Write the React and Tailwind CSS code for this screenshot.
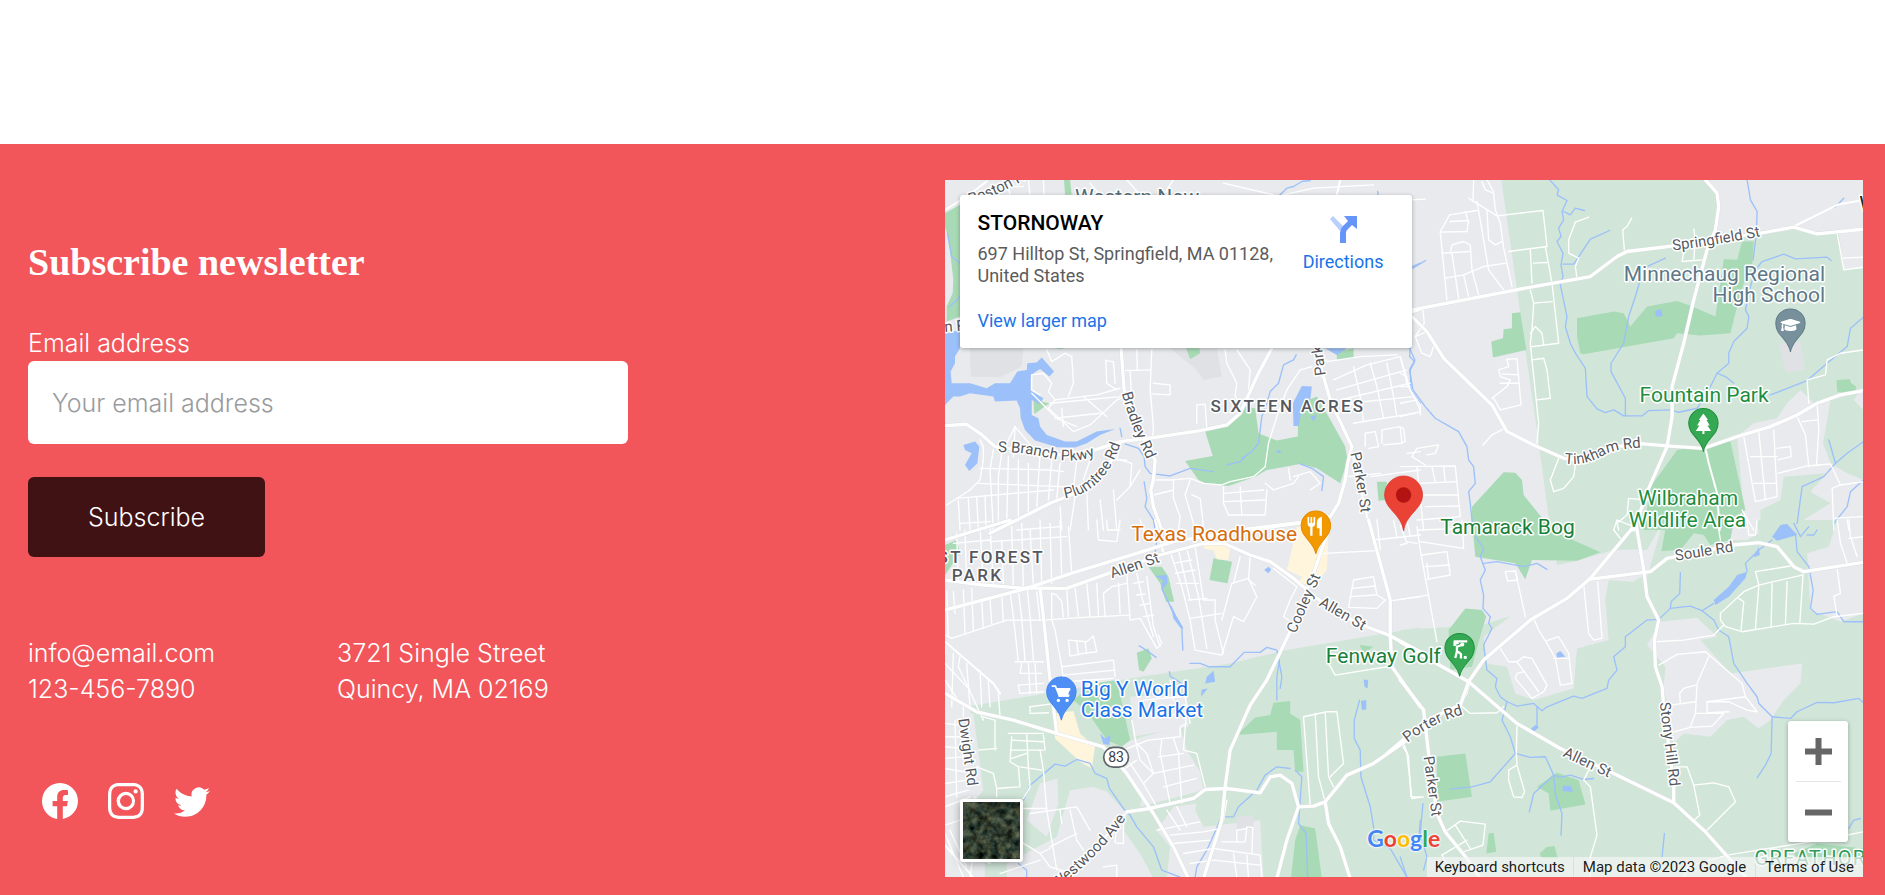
import React from "react";
import { FaGraduationCap } from "react-icons/fa";
import { BsFacebook, BsInstagram, BsTwitter } from "react-icons/bs";

/* The map canvas is 2754 x 2091 units and is split in four sheets, each with its own origin. */
const SHEETS = [
  {
    id: "nw",
    at: "translate(-15 -30)",
    pale: [],
    island: [],
    block: [
      "90,535 250,535 245,590 180,622 92,620",
      "690,535 830,535 845,620 790,630 770,600 745,580 720,560",
    ],
    green: [
      "15,130 60,105 60,440 20,455 20,410 38,370 40,330 25,200 15,170",
      "372,30 390,30 395,75 375,75",
      "738,535 778,535 780,550 750,568",
      "1190,545 1240,535 1240,565 1190,570",
      "280,690 328,700 283,732",
      "340,535 375,535 360,538",
      "795,785 860,770 915,710 945,715 955,790 1010,812 1073,800 1073,750 1105,690 1130,680 1165,740 1215,830 1222,870 1200,940 1130,895 1080,882 980,900 945,920 865,948 800,942 775,930 735,873 818,858",
      "1310,935 1340,935 1335,990 1315,992",
    ],
    yellow: [],
    water: [
      "15,490 60,480 60,535 45,560 45,580 32,605 35,640 90,640 140,655 165,640 210,640 232,605 260,600 262,580 290,578 305,563 342,605 328,620 300,597 280,610 272,625 272,662 310,685 300,703 275,690 275,735 295,745 300,770 320,795 375,815 410,815 440,800 470,785 525,777 480,795 440,820 405,833 350,832 320,822 285,812 255,780 242,745 240,715 230,692 165,695 160,680 90,670 60,680 40,680 15,705",
      "70,825 105,815 118,830 112,880 88,903 75,885 95,850 75,840",
      "1058,700 1085,648 1115,650 1110,690 1085,720 1075,768 1060,768",
      "1155,535 1220,535 1190,555",
      "1110,740 1130,735 1120,755",
      "1008,848 1015,838 1024,850",
    ],
    stream: [
      "1068,555 1060,570 1030,585 1015,640 990,665 980,700 965,740 955,820 935,845 905,865",
      "540,775 545,800",
      "555,822 595,835 612,860 615,890 630,910 690,918 750,895 820,905",
      "860,885 900,875 915,860",
      "1080,882 1115,895 1150,920 1145,962",
      "1018,76 1040,55 1060,50 1085,35 1110,32",
      "1410,535 1408,560 1423,575 1410,600 1412,660 1440,700",
      "22,190 35,260 60,280",
      "60,380 30,410",
      "612,935 620,985 615,1010 640,1050",
      "1416,290 1440,280",
      "1312,65 1314,76",
    ],
    minor: [
      "200,30 210,75", "265,30 270,75", "310,30 312,75", "450,40 480,75", "670,75 700,30", "560,30 600,75", "1030,75 1120,55 1300,45", "850,40 1000,75", "150,50 250,50",
      "275,615 310,610 335,640 325,665 345,690 470,675 540,655",
      "345,690 325,715 400,785 450,765 530,690 555,680",
      "275,670 350,745 410,770", "330,700 540,680", "345,745 480,730", "365,715 370,770", "430,680 500,740",
      "275,615 275,660 300,675",
      "320,540 335,575 375,550 395,560 400,640 385,680",
      "497,570 500,640 530,660", "497,572 520,575 525,640", "555,602 630,600", "635,540 630,660 640,770 638,800", "640,640 690,645 690,675 635,672", "570,602 575,690", "590,540 592,600",
      "855,540 860,580 890,640 885,680 900,700", "890,540 930,600 925,660",
      "770,760 770,705 795,703 800,775",
      "1115,590 1080,600 1040,660 1010,740 985,820 975,890 940,920 870,935 845,945 790,940 750,925 690,930 645,930",
      "1160,570 1130,600 1150,630", "1180,630 1280,585 1380,560 1400,640 1440,720", "1160,575 1260,560 1370,555", "1190,660 1400,600", "1200,690 1410,640", "1225,700 1420,680", "1240,590 1260,680 1270,755", "1290,580 1310,650 1330,745", "1340,580 1360,680 1370,740", "1240,760 1330,745 1425,730", "1205,720 1240,700",
      "1275,830 1275,790 1305,785 1315,830 1285,835", "1325,820 1325,780 1380,770 1385,820 1330,825",
      "1220,920 1320,910", "1290,920 1440,900", "1400,850 1440,845",
      "850,950 850,1000 865,1035 975,1035 980,960", "850,995 975,990", "900,950 905,1035", "850,970 970,960", "750,930 735,975 760,1060", "755,975 780,985 790,1070", "700,930 700,985 720,1040 715,1080", "640,975 700,960",
      "1060,920 1110,905 1140,940 1110,960", "975,940 1000,960 1060,940 1075,920", "1045,895 1050,930",
      "120,810 130,830 130,870 120,930 90,960", "160,840 150,900 160,1080", "185,850 175,920 175,1060", "225,770 220,860", "225,770 190,840", "225,770 275,830", "120,895 330,900 370,905", "110,940 370,950", "50,985 340,960", "90,960 20,1005",
      "205,860 200,1060", "235,870 235,1040", "265,880 265,1030", "300,850 290,1010", "335,870 325,990", "360,880 350,985", "55,990 60,1080", "85,985 90,1080", "110,980 115,1080", "135,975 138,1080", "60,1060 150,1055", "410,870 400,960", "450,870 430,930", "540,870 575,880 570,950 530,990", "480,990 490,1080", "520,960 530,1080", "600,900 570,950",
      "540,820 530,870 560,870", "405,980 390,1080", "440,960 445,1080", "360,1010 365,1080",
    ],
    mid: ["1190,75 1200,30", "1235,850 1260,950 1285,1060 1295,1080", "15,120 80,80 140,35", "1416,445 1440,470"],
    major: [
      "15,767 80,763 120,790 165,830 280,845 400,860 470,838 540,815 640,803 780,782 860,765 900,730 950,620 995,535",
      "543,535 552,660 600,790 645,870 640,930 632,960 640,1010 665,1080",
      "540,820 500,900 430,960 330,1000 210,1060 150,1090",
      "1128,535 1150,620 1170,690 1235,830 1222,880 1215,930 1195,1000 1170,1040 1100,1055 900,1080",
      "1416,425 1440,418",
    ],
  },
  {
    id: "ne",
    at: "translate(1365 -30)",
    pale: [
      "303,30 915,30 955,75 955,110 945,200 1180,170 1250,190 1315,190 1330,300 1389,295 1389,660 1310,680 1240,700 1200,660 1160,700 1130,745 1060,760 1010,800 1035,1080 450,1080 410,780 375,540 350,360",
      "1290,690 1389,665 1389,930 1340,910 1290,880 1268,820",
      "1150,920 1280,910 1230,965 1290,1000 1160,1080 1080,1080 1080,1020 1140,990",
    ],
    island: ["1360,690 1389,650 1389,720"],
    block: ["1135,520 1200,515 1212,600 1157,607"],
    green: [
      "530,445 640,425 670,430 690,470 740,410 830,393 865,405 945,440 970,268 1010,270 1025,215 1060,215 1055,290 1030,340 1005,430 990,490 900,497 830,490 820,505 550,553 540,550 530,500",
      "335,430 360,427 378,540 278,563 273,515 308,505 310,478 335,475",
      "310,907 345,908 365,930 370,975 430,1050 450,1080 215,1080 215,1010",
      "830,840 990,815 1035,1020 940,1080 730,1080 750,950 780,910",
      "1308,630 1348,628 1352,640 1367,650 1365,662 1320,668 1310,665",
    ],
    yellow: [],
    water: ["765,422 783,418 786,440 766,440", "1130,1080 1150,1062 1165,1080"],
    stream: [
      "448,30 475,60 470,75 500,92 485,125 490,150 475,175 482,200 470,215 488,250 482,285 488,320 480,345 500,440 495,470 510,520 525,550 555,595 560,680 590,717 615,728 640,720 670,738 725,738 745,722 810,720 835,727 890,715 925,660 950,610 985,580 985,550 1000,515 1040,475 1045,440 1035,420 1050,350 1065,300",
      "490,125 510,135 525,115 552,122",
      "488,283 520,283 570,208 628,182",
      "795,265 730,295 705,380 685,440 670,520 632,580 632,605 675,685 675,738",
      "1040,30 1050,90 1070,125 1068,190 1058,270",
      "1065,300 1085,275 1150,253 1185,267 1280,262 1292,272",
      "950,610 975,620 1000,640",
      "1110,675 1220,632 1280,580 1340,530 1350,475 1389,442",
      "28,535 44,570 28,600 38,660 75,710 105,745 175,785 200,830 205,870 220,890 225,940 205,965 210,1000 218,1080",
      "1389,930 1350,965 1340,1010 1300,1060",
      "1285,810 1305,880 1270,920 1205,950 1190,1060",
      "1305,880 1340,850 1389,815", "1303,112 1330,85", "38,295 76,272",
    ],
    minor: [
      "220,30 218,95", "205,85 290,138 428,122 440,230 325,245", "245,35 255,60 280,70 285,120 300,160 310,235 335,350", "260,30 280,65", "230,95 245,180 265,300 310,360",
      "148,135 230,122", "148,135 120,185 140,390", "150,155 205,152 200,185 120,187", "150,250 155,225 190,215 210,225 215,300 235,375", "125,250 210,245", "135,325 190,315 250,290 318,280", "155,250 175,385", "190,315 205,380", "195,125 205,160", "260,120 265,210 285,225 305,215",
      "390,240 395,340", "435,230 455,340 475,520 395,530", "400,280 440,278", "390,360 400,400 395,480 390,520 395,570 415,760 410,820", "400,400 455,395", "390,490 405,470 425,490 430,525", "395,570 430,565 440,600 450,685 410,690",
      "68,420 72,460 45,500 65,550 90,560 100,530", "45,500 80,485",
      "320,568 350,566 362,705 300,720", "320,568 325,590 295,600 300,620 330,630 320,650 275,685", "305,612 355,615", "300,640 358,640", "280,685 300,720",
      "565,142 525,157 505,210 505,250 535,265 525,290 530,325", "694,145 680,170 667,180 672,240", "880,178 885,210 850,245 845,275 905,270", "885,210 880,270",
      "1310,190 1330,300 1389,292", "1322,265 1389,262",
      "1389,540 1320,550 1280,570 1275,615 1220,630 1225,700", "1250,700 1255,780 1248,885", "1190,740 1215,795 1225,890", "1205,755 1250,750", "1030,800 1065,995 1130,980 1120,780", "1050,860 1130,860", "1060,940 1130,940", "1075,785 1095,990", "1130,835 1170,830 1172,860 1132,870", "1132,910 1220,888 1290,882 1320,945 1295,955 1300,1080", "1320,945 1389,935", "1025,1020 1060,1080", "1300,1045 1389,1040", "1340,1050 1345,1080",
      "475,865 450,930 460,965 490,955 520,920 525,885", "310,777 275,795 248,825",
      "0,560 30,660 60,705 60,735", "0,610 20,620", "0,650 30,650", "0,740 60,725", "0,700 50,690", "0,820 15,815 10,775 0,772",
      "35,860 50,835 115,825 105,850 80,855", "35,860 75,885", "0,890 165,888 180,1040 50,1050", "50,890 70,1080", "55,940 170,935", "65,975 175,975", "75,1010 178,1008", "95,890 105,935", "130,890 135,935",
      "685,985 740,990", "685,985 680,1035 650,1060 655,1080", "36,90 75,88",
    ],
    mid: ["915,835 925,880 950,970 958,1080", "1180,170 1310,105 1389,90"],
    major: [
      "36,420 400,350 570,320 650,260 680,245 820,228 1080,190 1180,172 1250,192 1389,178",
      "915,30 950,70 955,110 945,180 920,240 880,390 850,520 815,650 815,740 800,830 745,955 700,1080",
      "36,440 80,485 130,565 275,705 320,785 400,825 490,865 550,870 620,835 710,820 800,828 910,835 1010,800 1110,770 1190,735 1250,700 1320,675 1389,662",
    ],
  },
  {
    id: "sw",
    at: "translate(-15 1020)",
    pale: ["90,558 330,518 600,470 870,430 1040,390 1440,322 1440,1075 135,1075 130,850 100,820"],
    island: [
      "570,530 740,520 745,620 580,650",
      "575,660 720,620 740,690 780,755 790,810 600,860 605,830 555,745 520,690",
      "390,810 460,800 500,815 560,880 550,930 600,1000 640,1075 480,1075 200,1075 200,1030 350,950",
      "700,860 770,850 765,870 790,920 960,900 970,1075 680,1075 690,980 650,930",
      "15,590 100,580 130,810 60,900 15,920",
      "300,790 352,775 355,850 320,950 260,900",
    ],
    block: ["890,890 940,885 940,925 890,930"],
    green: [
      "15,75 50,60 60,100 15,165",
      "820,115 876,125 862,190 808,180",
      "625,140 665,140 685,170 702,245 678,245 660,190",
      "590,398 625,385 635,415 610,455 597,450",
      "400,540 460,490 530,480 570,660 545,680 500,660 445,580",
      "1000,548 1050,543 1050,580 1080,600 1090,755 1065,755 1060,690 1010,690 1010,635 890,645 945,592 990,585",
      "1080,915 1125,925 1145,1075 1052,1075 1065,960",
      "1258,375 1300,380 1270,400",
    ],
    yellow: [
      "1070,20 1120,15 1165,40 1160,150 1125,190 1070,195 1085,170 1040,150 1050,110",
      "788,75 840,70 870,85 865,120 830,118 820,90 795,88",
      "340,580 400,573 420,640 465,680 455,745 420,725 345,655",
    ],
    water: [
      "972,150 985,140 993,148 985,160", "800,470 820,452 825,485 795,490", "785,508 803,505 782,530",
      "1270,478 1284,480 1282,505 1273,500", "1262,543 1278,540 1278,568 1265,570", "480,640 495,655 512,645 508,675 490,672",
      "645,168 680,165 682,190 668,208 668,180", "690,250 710,290 730,325 722,325 700,295",
    ],
    stream: [
      "640,0 650,60 645,100", "668,190 665,205 700,280 725,320 728,390", "597,377 610,385 625,395 648,412",
      "750,430 780,430 805,440 870,440 912,397 960,397 980,382 1010,390 1025,470 1020,505", "1018,420 1010,470 1010,540", "688,455 690,468 740,500",
      "1258,540 1242,600 1242,655 1260,690 1262,770 1290,860 1300,920 1300,960 1350,985 1400,1071",
      "1050,745 1010,740 975,765 950,810 895,860 880,890 855,890", "1065,750 1085,770 1075,910 1098,940 1102,1071",
      "250,840 270,795 345,732 375,738 410,718 450,730 465,760 500,775 508,805 550,865 570,885 590,920 640,980 665,1050 720,1071",
      "765,1071 770,1040 800,990 840,900", "235,1030 260,1050 260,1071", "1440,900 1437,940",
    ],
    minor: [
      "50,40 55,180", "75,30 80,185", "120,20 130,190", "150,15 160,190", "185,60 190,190", "215,20 220,200", "245,10 250,200", "270,30 280,195", "300,0 305,200", "330,10 335,190", "360,0 365,175", "385,20 395,160", "40,70 150,60", "150,65 380,50", "230,30 360,20",
      "20,215 25,350", "45,280 40,215", "70,210 75,340", "95,205 100,330", "125,240 130,325", "150,235 155,310", "185,225 190,305", "210,215 220,290 235,425", "235,210 245,295 255,425", "262,210 270,290 280,420", "290,215 300,300",
      "15,345 35,355 110,330 200,300 310,300 430,292 570,285", "335,220 350,225 365,245 370,290", "335,220 335,300 345,330 365,440 370,480", "380,210 385,290", "405,205 415,290", "440,190 450,290", "495,290 490,220 515,200 560,190", "470,190 475,285", "535,190 540,280",
      "225,425 310,425", "245,430 240,460 305,460", "235,495 310,490", "235,495 240,520 310,515", "265,430 270,520", "285,430 290,520",
      "385,360 440,365 460,348 470,395 430,400 390,408 385,360", "410,365 415,405", "435,365 440,400", "365,440 520,420 525,470", "370,465 525,450", "380,485 520,475",
      "270,560 330,552", "270,560 270,580 325,578",
      "560,160 570,300 600,295 650,385 665,370 655,345", "590,160 605,230 640,350", "620,170 640,320 660,380", "580,190 610,185", "590,225 615,222", "600,255 630,250", "610,290 640,285",
      "470,0 475,60 530,65 540,0", "500,0 502,30 540,30", "600,0 610,30 640,35",
      "690,95 725,200 750,300 765,390 845,405 880,290 910,305 950,230 925,175 875,190 845,300", "715,90 750,240", "740,85 775,230 800,385", "765,80 790,240 825,240 825,300 850,400", "700,130 755,120", "705,160 765,150", "710,190 775,190", "745,240 800,235", "750,295 845,280", "900,110 880,190", "930,110 925,180 945,195",
      "1000,145 1070,200 1050,240 1030,290 1045,300", "1240,180 1300,170 1310,225 1335,240 1310,265 1225,262 1240,180", "1235,205 1305,198", "1230,230 1305,225",
      "1150,100 1310,92", "1355,242 1440,230", "1310,0 1320,90", "1300,60 1440,45", "1360,0 1370,50", "1400,0 1410,48",
      "1165,430 1185,465 1340,440", "1090,590 1160,575 1190,575 1210,730 1170,770", "1090,590 1110,855", "1125,580 1135,770 1155,845", "1155,578 1165,770 1180,800", "1390,670 1405,710 1412,830 1440,830",
      "15,380 15,400", "40,400 35,560", "60,410 55,440 130,600", "15,480 60,550", "80,430 90,560", "120,450 125,560", "145,480 150,560", "175,520 180,590", "15,430 90,510", "15,610 60,615", "15,650 60,650", "15,680 65,685", "15,715 70,710", "15,745 75,755", "15,790 80,780", "15,830 85,810", "45,600 50,830", "15,860 90,830",
      "70,550 70,590", "130,590 165,600 165,690", "115,690 170,685", "110,740 160,760 170,805 240,800 235,740 210,725 215,650", "170,805 170,830", "205,640 310,640", "215,660 310,665", "210,690 310,690", "215,715 260,700", "260,640 265,740", "310,645 315,690",
      "300,690 310,750 320,870 350,1050", "240,740 305,750", "265,740 270,800 250,835", "270,880 410,860 450,930", "330,980 410,940", "360,870 365,910", "390,870 410,960", "235,960 300,1000 330,985", "300,1000 330,1040 400,1060", "320,865 250,865", "410,960 430,990", "550,890 550,970 525,968 530,900", "490,1040 530,1035 530,1071",
      "15,915 60,900", "15,940 70,1071", "30,930 80,1040", "90,1071 100,1000 150,1030", "180,1060 300,1020", "105,830 100,850",
      "550,690 625,660 720,650 720,620 740,610", "555,745 590,720", "590,680 600,720 640,760 610,790", "570,730 610,790 650,860", "590,670 620,700 640,760", "575,600 590,680", "665,660 660,700 690,850", "640,760 760,735", "700,655 715,700 725,850", "740,560 730,690 770,700 795,800", "655,710 730,700", "670,800 770,775",
      "640,590 740,580", "610,540 720,530", "690,480 700,540", "735,530 750,610",
      "650,930 780,905", "690,945 790,935 840,925", "700,970 810,960", "730,1000 820,985 960,1005 965,1071", "750,1030 820,1020 960,1035", "880,1000 890,1071", "920,1005 925,1071", "845,965 915,965 920,920 938,922 935,1000", "890,965 890,930 920,925", "680,870 720,930", "710,860 740,920", "860,840 850,900",
    ],
    mid: ["645,0 670,100", "15,365 160,490 180,520", "15,975 90,1060 100,1075", "560,875 470,980 370,1075"],
    major: [
      "15,60 210,0",
      "15,270 250,208 400,158 590,100 700,65 850,40 1090,8",
      "0,178 130,195 240,204 380,205 520,155 660,105 790,70 850,70 930,105 990,125 1060,175 1125,230 1190,280 1280,320 1345,345 1440,395",
      "1165,30 1120,160 1045,345 980,480 930,555 870,690 855,800 845,900 790,1075",
      "300,205 310,290 330,480 350,640",
      "15,520 110,575 220,600 350,640 490,680 560,760 640,880 700,980 745,1075",
      "1285,0 1350,240 1350,345 1355,440 1440,560",
      "560,875 630,865 760,835 795,808 860,805 960,818 990,770 1020,765 1055,790 1075,860 1120,858 1155,845 1220,765 1300,730 1400,660",
      "1075,860 1040,960 1010,1075",
      "1155,845 1165,910 1200,980 1230,1075",
    ],
  },
  {
    id: "se",
    at: "translate(1365 1020)",
    pale: [
      "0,330 0,1075 1389,1075 1389,0 790,0 740,170 625,180 615,240 625,360 530,385 520,505 400,540 345,520 320,440 260,430 250,350 330,288 245,315",
      "450,0 790,0 740,90 640,90 520,125 470,135",
    ],
    island: [
      "740,375 780,305 890,293 950,350 900,360 990,460 1205,430 1200,490 1150,540 1110,600 1075,625 1030,590 980,600 930,650 850,640 820,670 790,500 795,440",
      "1220,100 1285,80 1310,0 1389,0 1389,280 1320,305 1230,270",
      "1010,0 1070,0 1075,40 1040,60 960,60",
      "640,90 720,88 750,150 700,185 620,180 560,170",
    ],
    block: [],
    green: [
      "215,0 450,30 600,97 530,122 395,120 375,178 345,130 225,110",
      "195,265 245,270 258,290 245,330 215,440 150,450 145,330",
      "110,710 195,700 215,830 110,845",
      "410,800 470,758 500,768 535,780 555,853 450,872 445,820",
      "800,0 1000,0 990,60 930,75 910,45 880,40 840,90 783,93",
      "265,940 280,938 288,995 258,1000",
      "418,1000 440,980 463,978 472,1015 425,1015",
      "1180,1000 1250,970 1389,985 1389,1010 1200,1030",
    ],
    yellow: [],
    water: [
      "1115,50 1140,15 1160,12 1190,45 1130,62", "940,240 985,200 1010,165 1040,155 1035,175 985,230 945,255",
      "468,400 480,393 495,410 470,413", "487,797 512,797 518,815 487,813", "392,625 410,612 415,622 400,635", "1075,80 1078,105 1060,112",
    ],
    stream: [
      "225,50 250,85 240,110 255,150 240,180 250,225 248,265 270,290 265,310 275,325 250,375 260,450 290,475 285,500 300,530 320,545 350,558 400,550 425,572 440,560 520,528 545,535 620,505 625,480 650,450 640,410 675,380 675,350 740,300 775,298 810,265 870,258 905,272 940,250",
      "250,130 290,125 370,140 410,130 440,148", "840,158 838,220 812,245 810,265",
      "905,272 940,300 955,330 985,350 1000,430 1040,490 1070,530 1075,550 1115,590 1112,700 1095,735 1070,773",
      "1115,590 1170,595 1190,575 1250,547 1300,548 1375,535 1389,548", "1040,155 1035,130 1075,90 1115,60",
      "1185,40 1190,95 1225,140 1238,210 1230,265 1250,283 1310,275 1330,305 1389,305",
      "320,545 305,600 330,650 345,700 390,712 435,710 460,765 465,820 485,880 482,945",
      "150,807 215,800 270,785 345,700", "460,765 400,820 387,875", "460,765 480,772 510,765 550,778 580,775", "410,560 410,610",
      "68,850 60,940 80,1010 70,1050", "792,940 785,1010", "1380,895 1360,900 1345,925", "0,1010 20,1071", "1180,10 1200,50 1225,20", "1220,45 1240,45 1250,30",
    ],
    minor: [
      "0,15 20,70 0,75", "20,65 50,70", "50,20 60,90 110,365", "60,65 190,85 185,0", "65,105 140,95 150,165 80,178", "75,140 148,135", "0,238 85,225", "55,30 190,25", "85,178 80,130",
      "315,155 345,153 352,180 322,183 315,155", "345,153 375,290", "550,195 565,340 580,360 605,355 592,185",
      "400,295 415,330 440,370 465,415 480,495 515,490 505,400 475,350 440,362", "460,415 505,415", "300,385 325,425 350,425 370,410 395,415 440,495 430,515 395,535 345,475 350,460 370,455", "350,425 415,515",
      "210,485 200,520 180,555", "180,555 210,580 290,578 310,560",
      "350,620 348,700 350,735 325,750 325,780 340,830 365,832 373,815 360,770 350,735",
      "0,665 20,700 35,835 70,830", "565,750 550,780 570,800 590,945 570,1010 570,1071",
      "135,935 180,903 255,912 248,975 190,995", "165,915 210,985", "125,1005 200,960", "125,1005 140,1030",
      "700,20 650,0 640,30 660,55", "950,0 960,60", "1040,0 1045,45 1065,45 1070,0",
      "1065,155 1170,138", "1065,155 1075,195 1205,165", "1075,195 1030,215 960,280 960,300 975,320 1025,335 1180,310 1240,312 1300,290 1389,280", "1015,235 1030,245 1022,330", "1075,200 1065,325", "1115,190 1112,318", "1160,185 1155,312", "1208,160 1198,310",
      "765,365 850,360 940,345 970,315", "775,435 830,403 915,395 1025,490 1035,530 1070,575 1040,570 985,545 920,545 920,578 985,575", "925,410 890,490 885,580 870,620", "885,495 850,505 838,520 840,550", "810,555 885,545", "885,580 970,580 935,618 870,622 820,635", "1035,530 920,545",
      "820,740 860,740 880,795 940,788 985,800 1005,845 915,935", "880,795 898,885 880,900", "1310,0 1320,70 1340,130", "1345,0 1350,50 1370,110", "1345,55 1389,50", "1310,145 1320,220 1300,228 1310,290", "980,1005 1290,955 1389,935", "850,1075 860,1040 980,1005",
    ],
    mid: [],
    major: [
      "0,365 100,425 205,485 350,610 480,685 640,760 820,848 915,935 1040,1075",
      "700,20 570,175 500,235 390,300 250,420 205,485 180,555",
      "0,480 70,570 85,700 110,880 135,935 200,1015 240,1075",
      "705,0 730,150 740,230 775,300 762,360 765,440 785,500 790,560 820,790 820,848",
      "565,178 750,155 800,115 1000,75 1075,68 1130,80 1180,140 1210,155 1389,127",
      "-40,700 20,650 90,595 180,555",
    ],
  },
];

const STREETS = [
  { sheet: 0, id: "boston", name: "Boston Rd", d: "M90,102 Q170,80 270,20" },
  { sheet: 0, id: "bradley", name: "Bradley Rd", d: "M545,670 Q565,745 590,800 T630,890" },
  { sheet: 0, id: "branch", name: "S Branch Pkwy", d: "M174,846 Q250,845 330,865 T480,850" },
  { sheet: 0, id: "plumtree", name: "Plumtree Rd", d: "M375,985 Q500,965 545,810" },
  { sheet: 0, id: "parker-n", name: "Parker St", d: "M1157,615 L1130,420" },
  { sheet: 0, id: "parker-m", name: "Parker St", d: "M1230,850 Q1252,940 1264,1050" },
  { sheet: 0, id: "boston-s", name: "n Rd", d: "M14,486 L120,478" },
  { sheet: 1, id: "springfield", name: "Springfield St", d: "M818,242 Q950,225 1100,196" },
  { sheet: 1, id: "tinkham", name: "Tinkham Rd", d: "M492,880 Q560,890 620,850 Q660,835 740,832" },
  { sheet: 2, id: "allen-w", name: "Allen St", d: "M516,175 L680,119" },
  { sheet: 2, id: "allen-m", name: "Allen St", d: "M1134,256 L1290,345" },
  { sheet: 2, id: "cooley", name: "Cooley St", d: "M1066,342 L1150,150" },
  { sheet: 2, id: "dwight", name: "Dwight Rd", d: "M55,597 L86,820" },
  { sheet: 2, id: "westwood", name: "Westwood Ave", d: "M350,1105 Q490,1000 575,870" },
  { sheet: 3, id: "soule", name: "Soule Rd", d: "M826,122 L1030,90" },
  { sheet: 3, id: "stony", name: "Stony Hill Rd", d: "M778,548 L812,830" },
  { sheet: 3, id: "parker-s", name: "Parker St", d: "M70,710 L97,910" },
  { sheet: 3, id: "allen-e", name: "Allen St", d: "M486,708 L640,780" },
  { sheet: 3, id: "porter", name: "Porter Rd", d: "M22,668 Q100,605 200,580" },
];

const Areas = ({ kind, fill }) =>
  SHEETS.map((s) => (
    <g key={s.id} transform={s.at} fill={fill}>
      {s[kind].map((p) => <polygon key={p} points={p} />)}
    </g>
  ));

const Lines = ({ kind, stroke, width }) =>
  SHEETS.map((s) => (
    <g key={s.id} transform={s.at} fill="none" stroke={stroke} strokeWidth={width} strokeLinejoin="round" strokeLinecap="round">
      {s[kind].map((p) => <polyline key={p} points={p} />)}
    </g>
  ));

const Pin = ({ x, y, fill, edge, children }) => (
  <g transform={`translate(${x} ${y})`}>
    <path d="M0,85 C-6,46 -44,36 -44,0 A44,44 0 1 1 44,0 C44,36 6,46 0,85Z" fill={fill} stroke={edge} strokeWidth="3" />
    {children}
  </g>
);

const place = "font-[Roboto,sans-serif] text-[63px] font-normal";
const district = "font-[Roboto,sans-serif] text-[51px] font-medium tracking-[7px]";
const halo = { stroke: "#ffffff", strokeWidth: 9, strokeLinejoin: "round", paintOrder: "stroke" };

function MapCanvas() {
  return (
    <svg className="block h-full w-full" viewBox="0 0 2754 2091" preserveAspectRatio="xMidYMid slice" role="img" aria-label="Map of Springfield, MA">
      <rect width="2754" height="2091" fill="#e8eaed" />
      <Areas kind="pale" fill="#d1e6d9" />
      <Areas kind="island" fill="#e8eaed" />
      <Areas kind="block" fill="#e0e1e5" />
      <Areas kind="green" fill="#a8dab5" />
      <Areas kind="yellow" fill="#fef5dc" />
      <Areas kind="water" fill="#9cc0f9" />
      <Lines kind="stream" stroke="#9cc0f9" width="4" />
      <Lines kind="minor" stroke="#ffffff" width="4" />
      <Lines kind="mid" stroke="#ffffff" width="6" />
      <Lines kind="major" stroke="#dadce0" width="12" />
      <Lines kind="major" stroke="#ffffff" width="10" />

      {STREETS.map((r) => (
        <g key={r.id} transform={SHEETS[r.sheet].at}>
          <path id={r.id} d={r.d} fill="none" />
          <text className="font-[Roboto,sans-serif] text-[45px]" fill="#55585d" {...halo}>
            <textPath href={`#${r.id}`}>{r.name}</textPath>
          </text>
        </g>
      ))}

      <g transform={SHEETS[0].at}>
        <text className={place} x="405" y="102" fill="#546e7a" {...halo}>Western New</text>
        <text className={district} x="811" y="725" fill="#55585d" {...halo}>SIXTEEN ACRES</text>
      </g>
      <g transform={SHEETS[1].at}>
        <text className={place} x="1274" y="333" textAnchor="end" fill="#5d7886" {...halo}>Minnechaug Regional</text>
        <text className={place} x="1274" y="396" textAnchor="end" fill="#5d7886" {...halo}>High School</text>
        <text className={place} x="911" y="696" textAnchor="middle" fill="#1e8e3e" {...halo}>Fountain Park</text>
        <text className={place} x="863" y="1006" textAnchor="middle" fill="#1e8e3e" {...halo}>Wilbraham</text>
        <text className={place} x="861" y="1070" textAnchor="middle" fill="#1e8e3e" {...halo}>Wildlife Area</text>
        <text className={place} x="1376" y="125" fill="#202124" {...halo}>W</text>
      </g>
      <g transform={SHEETS[2].at}>
        <text className={district} x="315" y="130" textAnchor="end" fill="#55585d" {...halo}>ST FOREST</text>
        <text className={district} x="35" y="183" fill="#55585d" {...halo}>PARK</text>
        <text className={place} x="1071" y="62" textAnchor="end" fill="#d56e0c" {...halo}>Texas Roadhouse</text>
        <text className={place} x="422" y="528" fill="#1a73e8" {...halo}>Big Y World</text>
        <text className={place} x="422" y="591" fill="#1a73e8" {...halo}>Class Market</text>
        <text className={place} x="1157" y="429" fill="#188038" {...halo}>Fenway Golf</text>
      </g>
      <g transform={SHEETS[3].at}>
        <text className={place} x="120" y="42" fill="#188038" {...halo}>Tamarack Bog</text>
        <text className="font-[Roboto,sans-serif] text-[60px] tracking-[4px]" x="1062" y="1035" fill="#2f9a58" {...halo}>GREATHORSE</text>
      </g>

      <g transform={SHEETS[2].at}>
        <rect x="491" y="682" width="74" height="59" rx="29" fill="#ffffff" stroke="#5f6368" strokeWidth="5" />
        <text className="font-[Roboto,sans-serif] text-[42px]" x="528" y="726" textAnchor="middle" fill="#3c4043">83</text>
      </g>

      <g transform={SHEETS[1].at}>
        <Pin x="1170" y="461" fill="#78909c" edge="#607d8b">
          <FaGraduationCap x="-30" y="-26" size="60" color="#ffffff" />
        </Pin>
        <Pin x="909" y="760" fill="#34a853" edge="#1e8e3e">
          <path d="M0,-29 L14,-10 H9 L19,7 H12 L23,23 H3 V32 H-3 V23 H-23 L-12,7 H-19 L-9,-10 H-14Z" fill="#ffffff" />
        </Pin>
      </g>
      <g transform={SHEETS[2].at}>
        <Pin x="1127" y="17" fill="#f29900" edge="#e68a00">
          <path d="M-25,-26 h5 v18 h4 v-18 h5 v18 h4 v-18 h5 v20 q0,8 -8,10 v26 h-7 v-26 q-8,-2 -8,-10Z M18,-27 v57 h-7 v-22 h-8 v-18 q1,-14 15,-17Z" fill="#ffffff" />
        </Pin>
        <Pin x="364" y="515" fill="#4f8ff5" edge="#4285f4">
          <path d="M-29,-17 h11 l11,27 h31 M-13,-6 h40" fill="none" stroke="#ffffff" strokeWidth="5" />
          <path d="M-16,-11 H27 L19,11 H-7Z" fill="#ffffff" />
          <path d="M-9,13 h32" stroke="#ffffff" strokeWidth="5" />
          <circle cx="-9" cy="26" r="5" fill="#ffffff" />
          <circle cx="17" cy="26" r="5" fill="#ffffff" />
        </Pin>
      </g>
      <g transform={SHEETS[3].at}>
        <Pin x="178" y="384" fill="#34a853" edge="#1e8e3e">
          <path d="M23,-20 H-15 V-6 M-13,-13 L-3,-16 M-8,-8 L-8,10 L-13,30 M-8,8 L4,18 L4,31 M-8,-4 L8,-10" fill="none" stroke="#ffffff" strokeWidth="7" strokeLinejoin="round" />
          <circle cx="8" cy="-11" r="6" fill="#ffffff" />
          <circle cx="17" cy="28" r="5" fill="#ffffff" />
        </Pin>
      </g>
      <g transform={SHEETS[0].at}>
        <path d="M1390,1083 C1384,1032 1333,1018 1333,975 A57,57 0 1 1 1447,975 C1447,1018 1396,1032 1390,1083Z" fill="#ea4335" stroke="#d93025" strokeWidth="2" />
        <circle cx="1390" cy="975" r="23" fill="#b31412" />
      </g>
    </svg>
  );
}

function PlaceCard() {
  return (
    <div className="absolute top-[15px] left-[15px] flex h-[153px] w-[452px] justify-between rounded-[3px] bg-white pt-4 pr-7 pl-[18px] shadow-[0_1px_4px_rgba(0,0,0,0.3)]">
      <div className="w-[304px]">
        <h3 className="text-[21px] leading-6 font-medium text-black">STORNOWAY</h3>
        <p className="mt-2 text-[18px] leading-[22px] text-[#5b5b5b]">
          697 Hilltop St, Springfield, MA 01128, United States
        </p>
        <a href="#map" className="mt-[23px] block text-[18px] leading-[22px] text-[#1a73e8]">View larger map</a>
      </div>
      <a href="#directions" className="flex flex-col items-center pt-[5px] text-[18px] leading-[22px] text-[#1a73e8]">
        <svg className="mb-2 h-[27px] w-[27px]" viewBox="0 0 27 27" aria-hidden="true">
          <path d="M0,3 L3,0 L14,11 L10,15Z" fill="#b9d0fd" />
          <path d="M10,27 V17 Q10,13 13,10 L18,5 L14,0 H27 V13 L22,9 L17,14 Q16,15 16,17 V27Z" fill="#6695fa" />
        </svg>
        Directions
      </a>
    </div>
  );
}

function GoogleMark() {
  const letters = [["G", "text-[#4285f4]"], ["o", "text-[#ea4335]"], ["o", "text-[#fbbc04]"], ["g", "text-[#4285f4]"], ["l", "text-[#34a853]"], ["e", "text-[#ea4335]"]];
  return (
    <a href="#google" aria-label="Google" className="absolute bottom-6 left-1/2 -translate-x-1/2 font-[Lato,sans-serif] text-[23px] leading-[30px] font-bold [text-shadow:0_0_2px_#fff,0_0_2px_#fff,0_0_3px_#fff]">
      {letters.map(([c, tone], i) => <span key={i} className={tone}>{c}</span>)}
    </a>
  );
}

function MapPanel() {
  return (
    <section id="map" aria-label="Location" className="relative h-[697px] overflow-hidden bg-[#e8eaed] font-[Roboto,sans-serif] font-normal">
      <MapCanvas />
      <PlaceCard />
      <button type="button" aria-label="Show satellite imagery" className="absolute bottom-[15px] left-[15px] h-[63px] w-[63px] overflow-hidden rounded-[3px] border-3 border-white bg-[#2e4237] shadow-[0_2px_8px_rgba(0,0,0,0.35)]">
        <svg className="h-full w-full" viewBox="0 0 57 57" aria-hidden="true">
          <filter id="canopy" x="0" y="0" width="1" height="1" colorInterpolationFilters="sRGB">
            <feTurbulence type="fractalNoise" baseFrequency="0.14" numOctaves="4" seed="8" />
            <feColorMatrix values="0.5 0.2 0 0 -0.15  0.45 0.3 0 0 -0.13  0.3 0.3 0 0 -0.11  0 0 0 0 1" />
          </filter>
          <rect width="57" height="57" filter="url(#canopy)" />
        </svg>
      </button>
      <div className="absolute right-[15px] bottom-[35px] flex h-[121px] w-[60px] flex-col items-center rounded-[3px] bg-white shadow-[0_1px_4px_rgba(0,0,0,0.3)]">
        <button type="button" aria-label="Zoom in" className="flex flex-1 items-center justify-center">
          <svg className="h-[27px] w-[27px]" viewBox="0 0 27 27" aria-hidden="true"><path d="M10.5 0h6v10.500h10.500v6H16.500V27h-6V16.500H0v-6h10.500Z" fill="#666" /></svg>
        </button>
        <div className="h-px w-[45px] bg-[#e6e6e6]" />
        <button type="button" aria-label="Zoom out" className="flex flex-1 items-center justify-center">
          <svg className="h-[27px] w-[27px]" viewBox="0 0 27 27" aria-hidden="true"><path d="M0 10.500h27v6H0Z" fill="#666" /></svg>
        </button>
      </div>
      <GoogleMark />
      <div className="absolute right-0 bottom-0 flex h-5 gap-px text-[15px] leading-5 whitespace-nowrap text-black/90">
        <button type="button" className="bg-[#f5f5f5]/70 px-2">Keyboard shortcuts</button>
        <span className="bg-[#f5f5f5]/70 px-[9px]">Map data ©2023 Google</span>
        <a href="#terms" className="bg-[#f5f5f5]/70 px-[9px]">Terms of Use</a>
      </div>
    </section>
  );
}

export default function App() {
  return (
    <div className="bg-white pt-36">
      <footer className="grid grid-cols-2 bg-[#f2565a] font-[Inter,sans-serif] text-[25px] leading-9 font-light text-white">
        <div className="pt-[94px] pl-7">
          <h2 className="font-['Liberation_Serif',serif] text-[38px] leading-[48px] font-bold">Subscribe newsletter</h2>
          <form className="mt-[39px]" onSubmit={(e) => e.preventDefault()}>
            <label htmlFor="email" className="block">Email address</label>
            <input id="email" type="email" placeholder="Your email address" className="block h-[83px] w-full max-w-[600px] rounded-md bg-white px-6 text-black placeholder:text-[#999b9e]" />
            <button type="submit" className="mt-[33px] block h-20 w-[237px] rounded-md bg-[#411214] text-white">Subscribe</button>
          </form>
          <div className="mt-[78px] flex">
            <p className="w-[309px]">
              <a href="mailto:info@email.com" className="block">info@email.com</a>
              <a href="tel:123-456-7890" className="block">123-456-7890</a>
            </p>
            <address className="not-italic">
              3721 Single Street<br />Quincy, MA 02169
            </address>
          </div>
          <nav aria-label="Social media" className="mt-[76px] flex gap-[30px] pl-[14px]">
            <a href="#facebook" aria-label="Facebook"><BsFacebook className="h-9 w-9" /></a>
            <a href="#instagram" aria-label="Instagram"><BsInstagram className="h-9 w-9" /></a>
            <a href="#twitter" aria-label="Twitter"><BsTwitter className="h-9 w-9" /></a>
          </nav>
        </div>
        <div className="pt-9 pr-[22px] pb-[18px] pl-[2px]">
          <MapPanel />
        </div>
      </footer>
    </div>
  );
}
